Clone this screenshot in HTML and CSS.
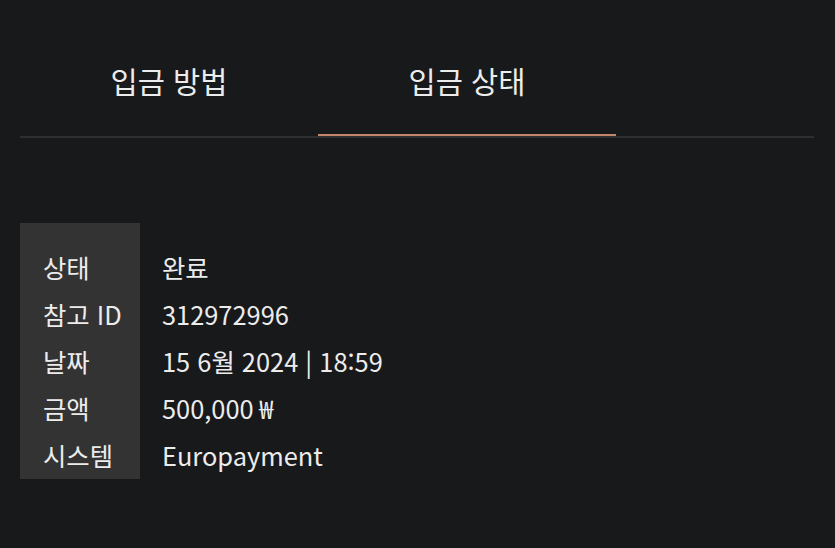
FILE: index.html
```html
<!DOCTYPE html>
<html lang="ko">
<head>
  <meta charset="UTF-8">
  <title>입금 상태</title>
  <link rel="stylesheet" href="styles.css">
</head>
<body>

  <div class="tabs">
    <div class="tab">입금 방법</div>
    <div class="tab active">입금 상태</div>
  </div>

  <div class="status">
    <div class="labels">
      <div class="row">상태</div>
      <div class="row">참고 ID</div>
      <div class="row">날짜</div>
      <div class="row">금액</div>
      <div class="row">시스템</div>
    </div>
    <div class="values">
      <div class="row">완료</div>
      <div class="row">312972996</div>
      <div class="row">15 6월 2024 | 18:59</div>
      <div class="row">500,000 ₩</div>
      <div class="row">Europayment</div>
    </div>
  </div>

</body>
</html>
```

FILE: styles.css
```css
body { margin: 0; background: #18191b; color: #ececec; font-family: "Noto Sans CJK KR", "Noto Sans", sans-serif; }
.tabs { display: flex; margin: 0 21px 0 20px; border-bottom: 2px solid #2e2f30; }
.tab { width: 298px; padding: 60px 0 34px; line-height: 40px; text-align: center; font-size: 29.5px; border-bottom: 2px solid transparent; }
.tab.active { border-bottom-color: #c4866a; }
.status { display: flex; margin: 85px 0 0 20px; }
.labels { width: 120px; background: #333333; padding: 21px 0 0 23px; box-sizing: border-box; }
.values { padding: 21px 0 0 22px; }
.row { font-size: 25.4px; line-height: 47px; }
```
